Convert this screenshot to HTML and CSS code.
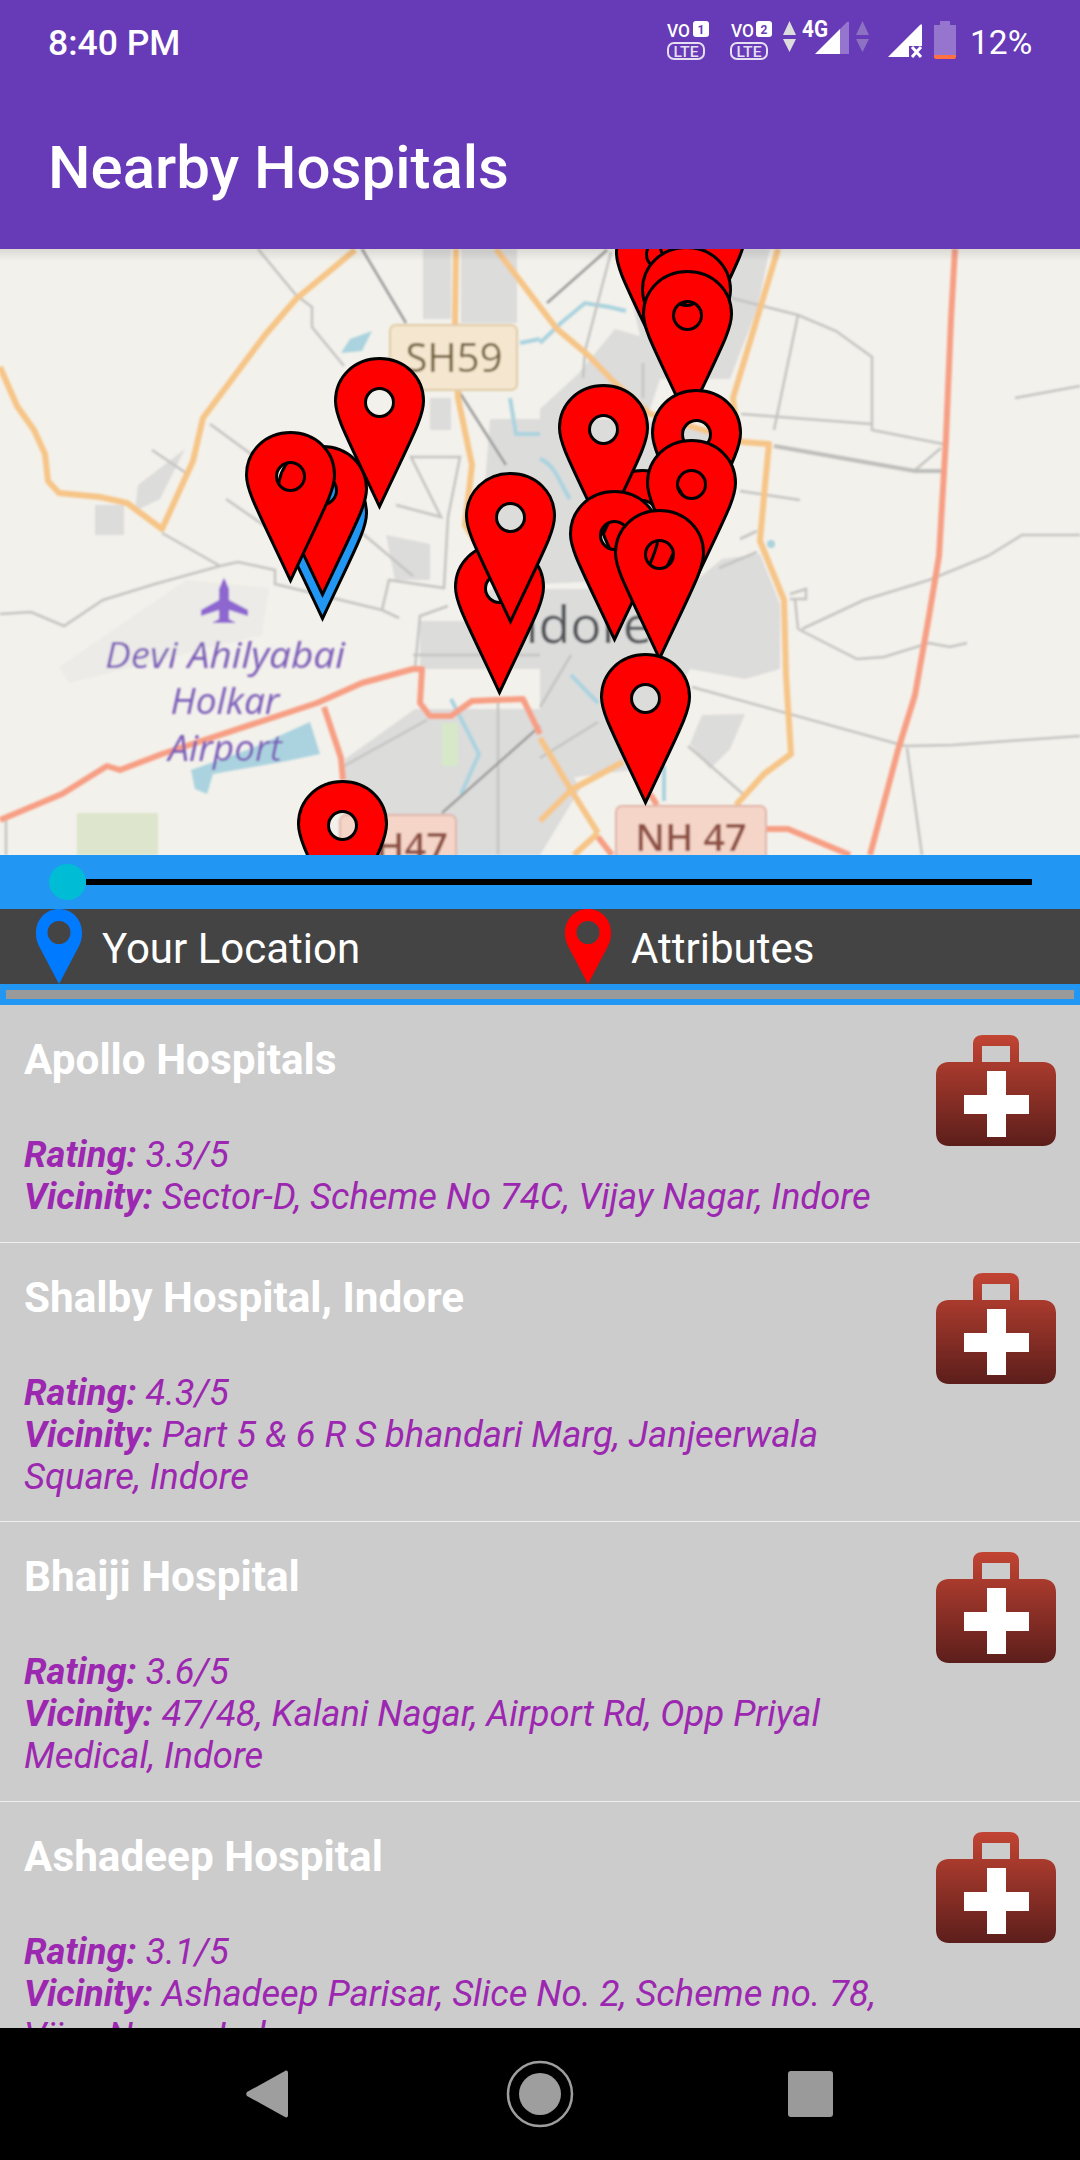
FILE: index.html
```html
<!DOCTYPE html>
<html lang="en">
<head>
<meta charset="utf-8">
<title>Nearby Hospitals</title>
<link rel="stylesheet" href="styles.css">
</head>
<body>
<svg class="defs" width="0" height="0" aria-hidden="true">
  <defs>
    <path id="pin" fill-rule="evenodd" d="M45.500 1.500C20.500 1.500 1.500 20 1.500 44C1.500 60 12 78 45.500 149.500C79 78 89.500 60 89.500 44C89.500 20 70.500 1.500 45.500 1.500ZM45.500 31.500A14 14 0 1 1 45.500 59.500A14 14 0 1 1 45.500 31.500Z"/>
    <symbol id="legend-pin" viewBox="0 0 46 75"><path fill-rule="evenodd" d="M23 0C10 0 0 10 0 24C0 30 1 33 4 39L23 75L42 39C45 33 46 30 46 24C46 10 36 0 23 0ZM23 12A11.500 11.500 0 1 1 23 35A11.500 11.500 0 1 1 23 12Z"/></symbol>
    <linearGradient id="kit" x1="0" y1="0" x2="0" y2="1">
      <stop offset="0" stop-color="#c24433"/>
      <stop offset="1" stop-color="#5c1e1b"/>
    </linearGradient>
    <symbol id="kit-icon" viewBox="0 0 120 112">
      <path fill="url(#kit)" fill-rule="evenodd" d="M37 28V10C37 4 41 1 47 1H73C79 1 83 4 83 10V28H107C115 28 120 33 120 41V99C120 107 115 112 107 112H13C5 112 0 107 0 99V41C0 33 5 28 13 28ZM46 28H74V12H46Z"/>
      <path fill="#fff" d="M51 37H70V61H93V80H70V103H51V80H28V61H51Z"/>
    </symbol>
  </defs>
</svg>

<div class="phone">
  <header class="appbar">
    <div class="status">
      <span class="time">8:40 PM</span>
      <div class="status-icons">
        <svg width="372" height="84" viewBox="0 0 372 84" class="status-svg">
          <g fill="#fff" stroke="none">
            <text x="67" y="37" class="vo" textLength="23" lengthAdjust="spacingAndGlyphs">VO</text>
            <rect x="93" y="21" width="16" height="16" rx="3"/>
            <text x="101" y="34" class="vonum">1</text>
            <rect x="68" y="43" width="36" height="16" rx="6" fill="none" stroke="#e6dff2" stroke-width="2"/>
            <text x="86" y="56.500" class="lte" textLength="25" lengthAdjust="spacingAndGlyphs">LTE</text>
            <text x="131" y="37" class="vo" textLength="23" lengthAdjust="spacingAndGlyphs">VO</text>
            <rect x="156" y="21" width="16" height="16" rx="3"/>
            <text x="164" y="34" class="vonum">2</text>
            <rect x="131" y="43" width="36" height="16" rx="6" fill="none" stroke="#e6dff2" stroke-width="2"/>
            <text x="149" y="56.500" class="lte" textLength="25" lengthAdjust="spacingAndGlyphs">LTE</text>
            <path fill="#ddd" d="M183 35L189.500 21L196 35ZM183 39H196L189.500 52Z"/>
            <text x="202" y="37" class="fourg" textLength="26" lengthAdjust="spacingAndGlyphs">4G</text>
            <path d="M215 54L240 29V54Z"/>
            <path fill="#9575cd" d="M240 29L246 23C248 21 249 21 249 23V54H240Z"/>
            <path fill="#8d72c4" d="M256 35L262.500 21L269 35ZM256 39H269L262.500 52Z"/>
            <path d="M288 57L320 25C321 24 322 24 322 26V46H309V57Z"/>
            <path d="M312 47L321 57M321 47L312 57" stroke="#fff" stroke-width="3" fill="none"/>
            <path fill="#9575cd" d="M340 21H350V25H356V55H334V25H340Z"/>
            <path fill="#ff7043" d="M334 55H356V57C356 58 355 59 354 59H336C335 59 334 58 334 57Z"/>
          </g>
        </svg>
        <span class="batt">12%</span>
      </div>
    </div>
    <h1 class="title">Nearby Hospitals</h1>
  </header>

  <div class="map">
    <svg class="map-svg" width="1080" height="606" viewBox="0 0 1080 606">
      <defs>
        <filter id="soft" x="0" y="0" width="100%" height="100%"><feGaussianBlur stdDeviation="1.100"/></filter>
        <linearGradient id="shade" x1="0" y1="0" x2="0" y2="1">
          <stop offset="0" stop-color="#000" stop-opacity="0.100"/>
          <stop offset="1" stop-color="#000" stop-opacity="0"/>
        </linearGradient>
      </defs>
      <rect width="1080" height="606" fill="#f3f1eb"/>
      <g filter="url(#soft)">
        <g fill="#dcdcdb">
          <path d="M423 0H451V70H423Z"/>
          <path d="M461 0H517V74H461Z"/>
          <path d="M430 149H451V181H430Z"/>
          <path d="M138 236L185 200L160 250L135 262Z"/>
          <path d="M95 256H124V286H95Z"/>
          <path d="M386 286L430 295V331H395Z"/>
          <path d="M506 205L540 190L545 225L515 235Z"/>
          <path d="M578 125L615 80L650 90L660 130L650 160L600 160L540 200V160Z"/>
          <path d="M620 0H770L757 60L730 130L650 130Z"/>
          <path d="M490 170H640L700 180L740 200L720 220L650 330L540 335L480 300Z"/>
          <path d="M722 310L760 305L780 355L780 420L745 430L690 420L650 390L650 370Z"/>
          <path d="M540 340H640L690 420L640 520L560 530L540 470Z"/>
          <path d="M702 466L745 465L730 500L710 520L690 495Z"/>
          <path d="M345 510L415 460H540L580 540L540 606H345Z"/>
          <path d="M420 372H470L490 340L540 340V420H420Z"/>
        </g>
        <path d="M59 418L186 331L269 339L262 386L69 434Z" fill="#ecebe7"/>
        <path d="M77 564H158V606H77Z" fill="#dde5cc"/>
        <path d="M442 474H458V517H442Z" fill="#d7e8c8"/>
        <g fill="#aad3df">
          <path d="M341 104L350 90L372 82L362 102Z"/>
          <path d="M191 521L250 500L310 473L320 505L282 513L213 525L207 545L195 540Z"/>
          <circle cx="771" cy="295" r="4"/>
        </g>
        <g fill="none" stroke="#aad3df" stroke-width="4">
          <path d="M520 94L540 90M510 149L516 185L540 185"/>
          <path d="M540 94L561 74L585 54L609 58L626 62"/>
          <path d="M451 450L479 505L461 545"/>
          <path d="M571 426L598 454"/>
          <path d="M664 517V552"/>
          <path d="M540 210C555 215 560 235 570 250"/>
        </g>
        <g fill="none" stroke="#c4c4c2" stroke-width="2.500">
          <path d="M258 0L296 46L312 58V78L344 117"/>
          <path d="M210 175L255 208M152 201L186 224M226 250L275 284"/>
          <path d="M0 365L31 363L64 377L103 351L155 335L220 317L238 313L275 321V335L382 361L399 369"/>
          <path d="M162 284L220 317"/>
          <path d="M382 361L389 331L444 339L448 268L460 208H411L441 268L396 256"/>
          <path d="M362 284L413 327"/>
          <path d="M344 517L427 471"/>
          <path d="M498 454V606"/>
          <path d="M415 420L420 367L448 357"/>
          <path d="M413 406H540"/>
          <path d="M585 102L611 3M583 129L585 102"/>
          <path d="M643 114V149"/>
          <path d="M731 49L798 66L836 82L872 108V181L943 195"/>
          <path d="M798 66L774 181"/>
          <path d="M741 165L871 175"/>
          <path d="M914 222L941 199"/>
          <path d="M740 242L800 251"/>
          <path d="M1015 149L1080 137"/>
          <path d="M719 319L757 303M740 290L757 282"/>
          <path d="M802 380L864 351L929 331L988 307L1022 286H1080"/>
          <path d="M798 380L857 410L884 408L929 394L950 398L967 394"/>
          <path d="M795 350L798 380M790 345L806 340V350H790"/>
          <path d="M692 438L905 497L953 496L1080 487"/>
          <path d="M907 499L922 606"/>
          <path d="M688 497L743 545"/>
          <path d="M540 458L571 406"/>
          <path d="M540 509L598 473"/>
          <path d="M6 606V570"/>
        </g>
        <path d="M774 197L915 222H941" fill="none" stroke="#bdbdbb" stroke-width="4"/>
        <g fill="none" stroke="#9b9b9b" stroke-width="2.500">
          <path d="M362 0L406 74"/>
          <path d="M458 141L506 216"/>
          <path d="M442 564L540 477"/>
          <path d="M547 54L607 1"/>
        </g>
        <g fill="none" stroke="#f6c587" stroke-width="6" stroke-linejoin="round">
          <path d="M355 1L296 50L265 86L203 169L193 212L162 280L127 254L100 248L59 244L48 232L45 205L34 181L17 157L0 118"/>
          <path d="M456 0L455 70L458 149L472 216L465 276L480 300"/>
          <path d="M496 0L540 58L557 80L588 106L614 133L650 165L743 193L769 195L765 236L760 292L784 351L786 426L791 505L764 525L736 556"/>
          <path d="M778 0L733 149L738 193"/>
          <path d="M540 489L571 541L598 584M540 572L571 541L623 513M598 584L574 606"/>
        </g>
        <g fill="none" stroke="#f79f84" stroke-width="6" stroke-linejoin="round">
          <path d="M955 0L951 70L946 189L939 307L929 367L915 446L898 501L870 606"/>
          <path d="M0 571L62 545L107 517L120 521L162 505L317 454L362 434L413 420H422L420 454L430 467H451L472 452L523 450L540 485"/>
          <path d="M324 458L341 509L343 531"/>
          <path d="M767 580H788L850 606"/>
          <path d="M650 545L657 556M598 588L612 606"/>
        </g>
        <path fill="#8d66d0" d="M224 329L229 340V351L248 361V367L229 361V370L236 374H212L219 370V361L201 367V361L219 351V340Z"/>
        <text x="225" y="419" class="airport" textLength="240" lengthAdjust="spacingAndGlyphs">Devi Ahilyabai</text>
        <text x="225" y="465" class="airport">Holkar</text>
        <text x="225" y="512" class="airport">Airport</text>
        <text x="652" y="394" class="city">Indore</text>
        <rect x="390" y="76" width="127" height="65" rx="6" fill="#f5e6cf" stroke="#e0cba5" stroke-width="2"/>
        <text x="454" y="123" class="shield sh">SH59</text>
        <rect x="340" y="566" width="116" height="60" rx="6" fill="#f5d5c8" stroke="#dfb5a9" stroke-width="2"/>
        <text x="412" y="611" class="shield nh">H47</text>
        <rect x="616" y="557" width="150" height="60" rx="6" fill="#f5d5c8" stroke="#dfb5a9" stroke-width="2"/>
        <text x="691" y="602" class="shield nh">NH 47</text>
      </g>
      <rect width="1080" height="12" fill="url(#shade)"/>
      <g fill="#2196f3" stroke="#000" stroke-width="3">
        <use href="#pin" x="277" y="220"/>
      </g>
      <g fill="#f00" stroke="#000" stroke-width="3">
        <use href="#pin" x="277" y="196"/>
        <use href="#pin" x="245" y="182"/>
        <use href="#pin" x="334" y="108"/>
        <use href="#pin" x="297" y="531"/>
        <use href="#pin" x="454" y="294"/>
        <use href="#pin" x="465" y="223"/>
        <use href="#pin" x="620" y="-75"/>
        <use href="#pin" x="615" y="-40"/>
        <use href="#pin" x="656" y="-60"/>
        <use href="#pin" x="641" y="-3"/>
        <use href="#pin" x="642" y="21"/>
        <use href="#pin" x="651" y="140"/>
        <use href="#pin" x="597" y="220"/>
        <use href="#pin" x="558" y="135"/>
        <use href="#pin" x="646" y="190"/>
        <use href="#pin" x="569" y="241"/>
        <use href="#pin" x="614" y="260"/>
        <use href="#pin" x="600" y="404"/>
      </g>
    </svg>
  </div>

  <div class="seek">
    <span class="thumb"></span>
    <span class="track"></span>
  </div>

  <div class="legend-wrap">
    <div class="legend">
      <div class="legend-item">
        <svg class="legend-pin blue"><use href="#legend-pin"/></svg>
        <span class="legend-label">Your Location</span>
      </div>
      <div class="legend-item">
        <svg class="legend-pin red"><use href="#legend-pin"/></svg>
        <span class="legend-label">Attributes</span>
      </div>
    </div>
    <div class="legend-rule"><span></span></div>
  </div>

  <main class="list">
    <article class="row">
      <div class="row-text">
        <h2 class="name">Apollo Hospitals</h2>
        <p class="meta"><b>Rating:</b> 3.3/5<br><b>Vicinity:</b> Sector-D, Scheme No 74C, Vijay Nagar, Indore</p>
      </div>
      <svg class="kit"><use href="#kit-icon"/></svg>
    </article>
    <article class="row">
      <div class="row-text">
        <h2 class="name">Shalby Hospital, Indore</h2>
        <p class="meta"><b>Rating:</b> 4.3/5<br><b>Vicinity:</b> Part 5 &amp; 6 R S bhandari Marg, Janjeerwala Square, Indore</p>
      </div>
      <svg class="kit"><use href="#kit-icon"/></svg>
    </article>
    <article class="row">
      <div class="row-text">
        <h2 class="name">Bhaiji Hospital</h2>
        <p class="meta"><b>Rating:</b> 3.6/5<br><b>Vicinity:</b> 47/48, Kalani Nagar, Airport Rd, Opp Priyal Medical, Indore</p>
      </div>
      <svg class="kit"><use href="#kit-icon"/></svg>
    </article>
    <article class="row">
      <div class="row-text">
        <h2 class="name">Ashadeep Hospital</h2>
        <p class="meta"><b>Rating:</b> 3.1/5<br><b>Vicinity:</b> Ashadeep Parisar, Slice No. 2, Scheme no. 78, Vijay Nagar, Indore</p>
      </div>
      <svg class="kit"><use href="#kit-icon"/></svg>
    </article>
  </main>

  <footer class="navbar">
    <svg width="680" height="132" viewBox="0 0 680 132">
      <path d="M47 64L85 43C87 42 88 43 88 45V87C88 89 87 90 85 89L47 68C46 67 46 65 47 64Z" fill="#9e9e9e"/>
      <circle cx="340" cy="66" r="32" fill="none" stroke="#9e9e9e" stroke-width="2.500"/>
      <circle cx="340" cy="66" r="21" fill="#9e9e9e"/>
      <rect x="588" y="43" width="45" height="46" rx="3" fill="#9a9a9a"/>
    </svg>
  </footer>
</div>
</body>
</html>
```

FILE: styles.css
```css
* { box-sizing: border-box; }
html, body { margin: 0; padding: 0; }
body { background: #000; font-family: Roboto, "Noto Sans", sans-serif; }
.defs { position: absolute; }
.phone { width: 1080px; height: 2160px; display: flex; flex-direction: column; overflow: hidden; }

.appbar { height: 249px; background: #673ab7; color: #fff; flex: none; }
.status { height: 84px; display: flex; align-items: center; justify-content: space-between; padding: 0 48px; }
.time { font-size: 35.5px; font-weight: 500; padding-top: 1px; }
.status-icons { display: flex; align-items: center; height: 84px; }
.status-svg { display: block; }
.batt { width: 62px; margin-left: -2px; font-size: 33.5px; font-weight: 400; padding-top: 1px; white-space: nowrap; }
.vo { font: 500 18px Roboto, sans-serif; }
.vonum { font: 700 12px Roboto, sans-serif; text-anchor: middle; fill: #673ab7; }
.lte { font: 500 15px Roboto, sans-serif; text-anchor: middle; fill: #e6dff2; }
.fourg { font: 700 24px Roboto, sans-serif; }
.title { margin: 0; padding: 42px 0 0 48px; font-size: 60px; font-weight: 500; line-height: 84px; }

.map { height: 606px; flex: none; overflow: hidden; background: #f3f1eb; }
.map-svg { display: block; }
.airport { font: italic 500 37px "Open Sans", sans-serif; fill: #7a5cb8; text-anchor: middle; }
.city { font: 400 52px "Open Sans", sans-serif; fill: #55565a; text-anchor: end; }
.shield { font: 400 38px "Open Sans", sans-serif; text-anchor: middle; }
.sh { fill: #75623e; font-size: 40px; }
.nh { fill: #8e4f42; font-weight: 600; }

.seek { height: 54px; flex: none; background: #2196f3; display: flex; align-items: center; padding: 0 48px 0 49px; }
.thumb { width: 37px; height: 36px; border-radius: 50%; background: #00bcd4; flex: none; }
.track { height: 6px; flex: 1; background: #000; }

.legend-wrap { flex: none; background: #2196f3; }
.legend { height: 75px; background: #444; display: grid; grid-template-columns: 529px 1fr; }
.legend-item { display: flex; align-items: flex-start; color: #fff; padding-left: 36px; }
.legend-pin { width: 46px; height: 75px; flex: none; display: block; }
.blue { fill: #007aff; }
.red { fill: #f00; }
.legend-label { font-size: 42px; line-height: 75px; margin-left: 20px; padding-top: 2px; }
.legend-rule { height: 21px; padding: 6px; }
.legend-rule span { display: block; height: 9px; background: #9a9a9a; }

.list { height: 1023px; flex: none; background: #ccc; overflow: hidden; }
.row { display: flex; justify-content: space-between; padding: 29px 24px 23.5px 24px; border-bottom: 1.5px solid #eee; }
.row-text { width: 880px; padding-top: 2px; }
.name { margin: 0 0 50px; font-size: 42.3px; line-height: 48px; font-weight: 700; color: #fff; }
.meta { margin: 0; font-size: 36.35px; line-height: 42px; font-style: italic; color: #9c27b0; }
.kit { width: 120px; height: 112px; flex: none; }

.navbar { flex: 1; background: #000; display: flex; justify-content: center; }
```
